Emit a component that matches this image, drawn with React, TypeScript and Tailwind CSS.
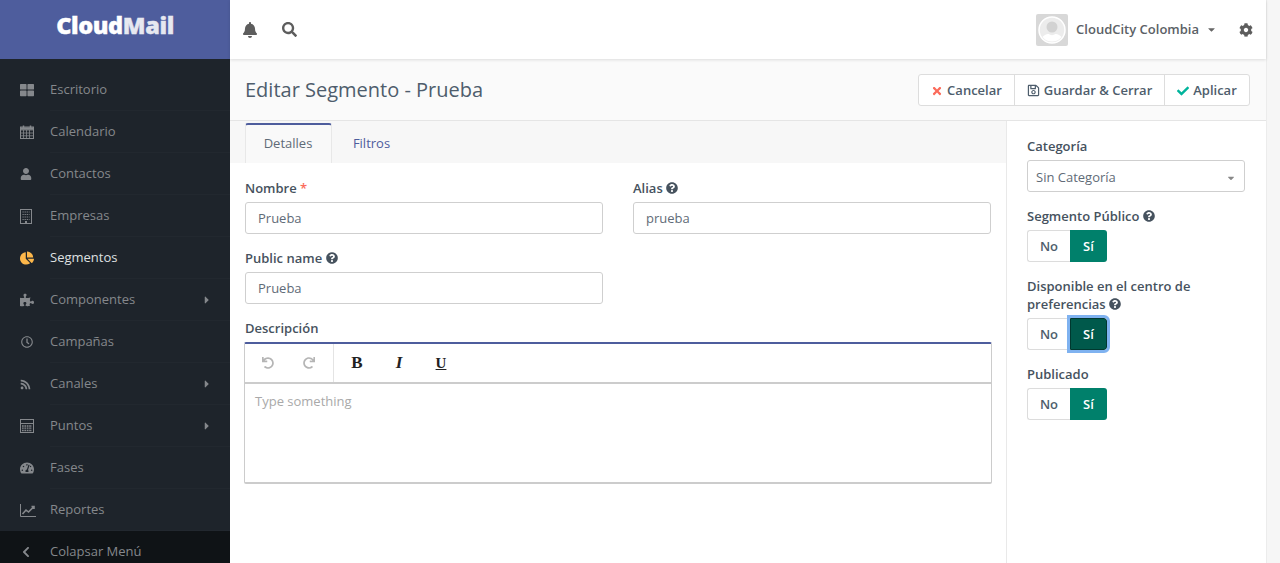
import type { ReactNode } from "react";
import {
  FaBell,
  FaCaretDown,
  FaCaretRight,
  FaChartPie,
  FaCheck,
  FaChevronLeft,
  FaCog,
  FaPuzzlePiece,
  FaQuestionCircle,
  FaRedo,
  FaRegClock,
  FaRegSave,
  FaRss,
  FaSearch,
  FaTachometerAlt,
  FaThLarge,
  FaTimes,
  FaUndo,
  FaUser,
} from "react-icons/fa";

const CalendarIcon = () => (
  <svg width="14" height="14" viewBox="0 0 14 14" fill="none" stroke="currentColor">
    <rect x="0.5" y="2" width="13" height="11.500" />
    <path d="M0.500 5h13M0.500 8h13M0.500 10.800h13M3.500 5v8.500M6.500 5v8.500M9.500 5v8.500" strokeWidth="0.8" />
    <path d="M0.500 3.500h13" strokeWidth="2.500" />
    <path d="M3.500 0.500v3M10.500 0.500v3" strokeWidth="1.500" />
  </svg>
);

const BuildingIcon = () => (
  <svg width="12" height="15" viewBox="0 0 12 15" fill="none" stroke="currentColor">
    <rect x="0.500" y="0.500" width="11" height="14" />
    <path d="M2.500 3h7M2.500 5.500h7M2.500 8h7M2.500 10.500h7" strokeWidth="1.200" strokeDasharray="1.200 0.900" />
    <path d="M5 13h2" strokeWidth="2" />
  </svg>
);

const CalculatorIcon = () => (
  <svg width="14" height="14" viewBox="0 0 14 14" fill="none" stroke="currentColor">
    <rect x="0.500" y="0.500" width="13" height="13" />
    <path d="M0.500 4.500h13" />
    <path d="M2 7h10M2 9.200h10M2 11.500h10" strokeWidth="1.300" strokeDasharray="1.700 0.700" />
  </svg>
);

const ChartIcon = () => (
  <svg width="16" height="13" viewBox="0 0 16 13" fill="none" stroke="currentColor">
    <path d="M0.500 0v12.500h15.500" />
    <path d="M2.500 10l3.500-4 2.500 2 5.500-5.500M11.500 2.500h2.500v2.500" strokeWidth="1.600" />
  </svg>
);

const menu = [
  { label: "Escritorio", icon: <FaThLarge size={14} /> },
  { label: "Calendario", icon: <CalendarIcon /> },
  { label: "Contactos", icon: <FaUser size={12} /> },
  { label: "Empresas", icon: <BuildingIcon /> },
  { label: "Segmentos", icon: <FaChartPie size={14} />, active: true },
  { label: "Componentes", icon: <FaPuzzlePiece size={14} />, sub: true },
  { label: "Campañas", icon: <FaRegClock size={12} className="ml-px" /> },
  { label: "Canales", icon: <FaRss size={11} />, sub: true },
  { label: "Puntos", icon: <CalculatorIcon />, sub: true },
  { label: "Fases", icon: <FaTachometerAlt size={14} /> },
  { label: "Reportes", icon: <ChartIcon /> },
];

const Sidebar = () => {
  return (
    <aside className="w-[230px] shrink-0 h-[563px] flex flex-col bg-[#1e242b] overflow-hidden">
      <div className="h-[59px] shrink-0 bg-[#4e5d9d] flex justify-center">
        <span className="text-[23.500px] leading-[50px] font-extrabold tracking-[-0.4px] text-white [-webkit-text-stroke:0.4px_white]">
          Cloud<span className="text-[#e6e8f0] [-webkit-text-stroke:0.4px_#e6e8f0]">Mail</span>
        </span>
      </div>
      <nav className="pt-[10px] shrink-0">
        {menu.map((item) => (
          <div key={item.label} className="h-[42px] flex items-center pl-[20px]">
            <span
              className={`w-[30px] shrink-0 flex items-center ${
                item.active ? "text-[#fdb74a]" : "text-[#85888c]"
              }`}
            >
              {item.icon}
            </span>
            <div
              className={`flex-1 h-full flex items-center justify-between pr-[17px] border-b border-[#22282f] text-[13px] ${
                item.active ? "text-[#dfe0e1] font-medium" : "text-[#85888c]"
              }`}
            >
              {item.label}
              {item.sub && <FaCaretRight size={12} className="text-[#85888c]" />}
            </div>
          </div>
        ))}
      </nav>
      <div className="h-[42px] shrink-0 bg-[#0f1316] flex items-center pl-[20px] text-[13px] text-[#85888c]">
        <span className="w-[30px]">
          <FaChevronLeft size={12} />
        </span>
        Colapsar Menú
      </div>
    </aside>
  );
};

const Topbar = () => {
  return (
    <header className="relative z-10 h-[59px] shrink-0 bg-white shadow-[0_1px_3px_rgba(0,0,0,0.12)] flex items-center pl-[12px] pr-[13px] text-[#5d5d5d]">
      <FaBell size={16} />
      <FaSearch size={15} className="ml-[24px]" />
      <div className="ml-auto flex items-center">
        <div className="w-[32px] h-[32px] rounded-[2px] bg-[#d8d8d8] flex items-center justify-center">
          <svg width="28" height="28" viewBox="0 0 28 28">
            <circle cx="14" cy="14" r="13" fill="#ececec" stroke="#ffffff" strokeWidth="1.500" />
            <circle cx="14" cy="11" r="5.500" fill="#d2d2d2" />
            <path d="M4.500 21c2-2.500 5-3 6.500-3 1 1.500 5 1.500 6 0 1.500 0 4.500 0.500 6.500 3-2.500 3-5.500 4.500-9.500 4.500s-7-1.500-9.500-4.500z" fill="#ffffff" />
          </svg>
        </div>
        <span className="ml-[8px] text-[13px] font-semibold text-[#5b6166]">CloudCity Colombia</span>
        <FaCaretDown size={11} className="ml-[7px] text-[#666]" />
        <FaCog size={14} className="ml-[22px]" />
      </div>
    </header>
  );
};

const Label = ({ children }: { children: ReactNode }) => (
  <div className="min-h-[18px] leading-[18px] text-[13px] font-semibold text-[#46525e] mb-[5px]">
    {children}
  </div>
);

const Help = () => (
  <FaQuestionCircle size={12} className="inline-block align-[-1px] text-[#46525e]" />
);

const TextInput = ({ value }: { value: string }) => (
  <div className="h-[32px] border border-[#cfcfcf] rounded-[3px] px-[12px] pt-[2px] flex items-center text-[13px] text-[#5f6b77]">
    {value}
  </div>
);

const YesNo = ({ focused }: { focused?: boolean }) => (
  <div className="flex h-[32px] w-[80px] text-[13px] font-semibold">
    <div className="w-[43px] pt-[2px] border border-r-0 border-[#dcdcdc] rounded-l-[3px] flex items-center justify-center text-[#4e5d6c]">
      No
    </div>
    <div
      className={
        focused
          ? "w-[37px] pt-[2px] rounded-r-[3px] flex items-center justify-center text-white bg-[#00594b] border border-[#00382f] outline-[3px] outline-[#7fb2f0]"
          : "w-[37px] pt-[2px] rounded-r-[3px] flex items-center justify-center text-white bg-[#00806b]"
      }
    >
      Sí
    </div>
  </div>
);

const HeaderButton = ({ icon, className, children }: { icon: ReactNode; className: string; children: ReactNode }) => (
  <div className={`h-full pt-[2px] flex items-center justify-center gap-[4px] text-[13px] font-semibold text-[#4e5d6c] ${className}`}>
    {icon}
    {children}
  </div>
);

const Editor = () => {
  return (
    <div className="-mx-px h-[142px] flex flex-col border border-[#cccccc] border-t-2 border-t-[#4e5d9d] border-b-2 rounded-[2px]">
      <div className="h-[40px] shrink-0 flex items-center border-b-2 border-[#cccccc]">
        <div className="w-[89px] h-full flex items-center gap-[29px] pl-[17px] border-r border-[#e4e4e4] text-[#b5b5b5]">
          <FaUndo size={12} />
          <FaRedo size={12} />
        </div>
        <div className="flex items-center font-['Liberation_Serif',serif] text-[#222] text-[17px] font-bold">
          <span className="w-[14px] ml-[16px] text-center">B</span>
          <span className="w-[14px] ml-[28px] text-center italic">I</span>
          <span className="w-[14px] ml-[28px] text-center underline text-[15px]">U</span>
        </div>
      </div>
      <div className="px-[10px] py-[8px] text-[13px] leading-[18px] text-[#a9a9a9]">Type something</div>
    </div>
  );
};

export default function App() {
  return (
    <div className="flex h-[563px] overflow-hidden bg-[#f6f6f6] font-['Open_Sans',sans-serif]">
      <Sidebar />
      <div className="flex-1 flex flex-col min-w-0 border-r border-[#ececec] mr-[13px] bg-white">
        <Topbar />
        <div className="h-[62px] shrink-0 bg-[#fafafa] border-b border-[#e5e5e5] flex items-center justify-between pl-[15px] pr-[16px]">
          <h1 className="text-[20px] text-[#4e5d6c]">Editar Segmento - Prueba</h1>
          <div className="h-[32px] flex items-center bg-white border border-[#dddddd] rounded-[3px] divide-x divide-[#dddddd]">
            <HeaderButton className="w-[96px]" icon={<FaTimes size={12} className="text-[#fb6b5b]" />}>
              Cancelar
            </HeaderButton>
            <HeaderButton className="w-[150px]" icon={<FaRegSave size={13} className="text-[#4e5d6c]" />}>
              Guardar &amp; Cerrar
            </HeaderButton>
            <HeaderButton className="w-[84px]" icon={<FaCheck size={12} className="text-[#00b49c]" />}>
              Aplicar
            </HeaderButton>
          </div>
        </div>
        <div className="flex-1 flex min-h-0">
          <main className="w-[777px] shrink-0 border-r border-[#e9e9e9]">
            <div className="h-[42px] bg-[#f7f7f7] pl-[15px] pt-[2px] flex text-[13px]">
              <div className="w-[87px] h-[40px] pr-[1px] flex items-center justify-center border-t-2 border-t-[#4e5d9d] border-x border-x-[#e8e8e8] bg-[#f9f9f9] text-[#5f6b77] rounded-t-[3px]">
                Detalles
              </div>
              <div className="w-[79px] h-[40px] pt-[1px] flex items-center justify-center text-[#4e5d9d]">Filtros</div>
            </div>
            <div className="px-[15px] pt-[16px]">
              <div className="grid grid-cols-2 gap-x-[30px] gap-y-[15px]">
                <div>
                  <Label>
                    Nombre <span className="text-[#fb6b5b]">*</span>
                  </Label>
                  <TextInput value="Prueba" />
                </div>
                <div>
                  <Label>
                    Alias <Help />
                  </Label>
                  <TextInput value="prueba" />
                </div>
                <div>
                  <Label>
                    Public name <Help />
                  </Label>
                  <TextInput value="Prueba" />
                </div>
              </div>
              <div className="mt-[15px]">
                <Label>Descripción</Label>
                <Editor />
              </div>
            </div>
          </main>
          <section className="flex-1 pt-[16px] pl-[20px] pr-[21px]">
            <Label>Categoría</Label>
            <div className="h-[32px] border border-[#cfcfcf] rounded-[3px] pl-[8px] pr-[8px] pt-[4px] flex items-center justify-between text-[13px] text-[#5f6b77]">
              Sin Categoría
              <FaCaretDown size={10} className="text-[#888]" />
            </div>
            <div className="mt-[15px]">
              <Label>
                Segmento Público <Help />
              </Label>
              <YesNo />
            </div>
            <div className="mt-[15px]">
              <Label>
                Disponible en el centro de preferencias <Help />
              </Label>
              <YesNo focused />
            </div>
            <div className="mt-[15px]">
              <Label>Publicado</Label>
              <YesNo />
            </div>
          </section>
        </div>
      </div>
    </div>
  );
}
